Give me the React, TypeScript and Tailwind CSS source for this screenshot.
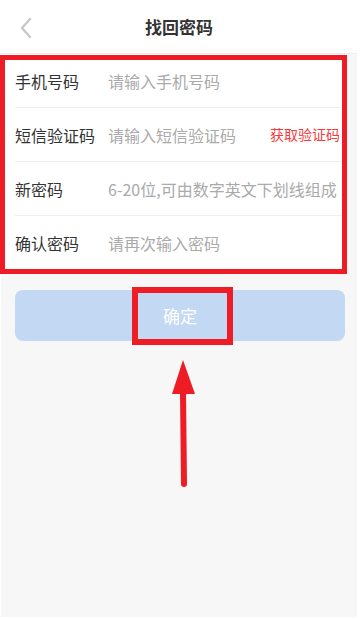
const font = { fontFamily: '"Noto Sans CJK SC", "Noto Sans", sans-serif' }

const rows = [
  { label: '手机号码', placeholder: '请输入手机号码' },
  { label: '短信验证码', placeholder: '请输入短信验证码', action: '获取验证码' },
  { label: '新密码', placeholder: '6-20位,可由数字英文下划线组成' },
  { label: '确认密码', placeholder: '请再次输入密码' },
]

function BackIcon() {
  return (
    <svg width="14" height="22" viewBox="0 0 14 22" fill="none">
      <path d="M11 2 L3 11 L11 20" stroke="#c8c8c8" strokeWidth="2.4" strokeLinecap="round" strokeLinejoin="round" />
    </svg>
  )
}

export default function App() {
  return (
    <div className="relative h-[619px] w-[360px] overflow-hidden bg-white pb-[2px] pl-[1px] pr-[3px]" style={font}>
      <div className="flex h-full flex-col bg-[#f7f7f7]">
        <header className="relative flex h-[54px] items-center justify-center border-b border-[#eeeeee] bg-white">
          <button className="absolute left-[18px] top-[17px]">
            <BackIcon />
          </button>
          <h1 className="text-[17px] font-semibold text-[#333]">找回密码</h1>
        </header>

        <div className="mr-[14px] bg-white pl-[14px]">
          {rows.map((row, i) => (
            <div
              key={row.label}
              className={`flex h-[54px] items-center pr-[3px] ${i < rows.length - 1 ? 'border-b border-[#eeeeee]' : ''}`}
            >
              <span className="w-[93px] shrink-0 text-[16px] text-[#333]">{row.label}</span>
              <span className="flex-1 whitespace-nowrap text-[16px] text-[#aaaaaa]">{row.placeholder}</span>
              {row.action && <span className="text-[14px] text-[#f53b3b]">{row.action}</span>}
            </div>
          ))}
        </div>

        <div className="ml-[14px] mr-[12px] mt-[20px] flex h-[51px] items-center justify-center rounded-lg bg-[#c2d8f3]">
          <span className="text-[17px] text-white">确定</span>
        </div>
      </div>

      {/* annotation overlays */}
      <div className="pointer-events-none absolute left-0 top-[55px] h-[219px] w-[347px] border-[5px] border-[#ee1c25]" />
      <div className="pointer-events-none absolute left-[132px] top-[287px] h-[58px] w-[101px] border-[6px] border-[#ee1c25]" />
      <svg className="pointer-events-none absolute left-[168px] top-[358px]" width="30" height="132" viewBox="0 0 30 132">
        <polygon points="15,2 4,36 27,36" fill="#ee1c25" />
        <line x1="15" y1="34" x2="16" y2="126" stroke="#ee1c25" strokeWidth="6" strokeLinecap="round" />
      </svg>
    </div>
  )
}
